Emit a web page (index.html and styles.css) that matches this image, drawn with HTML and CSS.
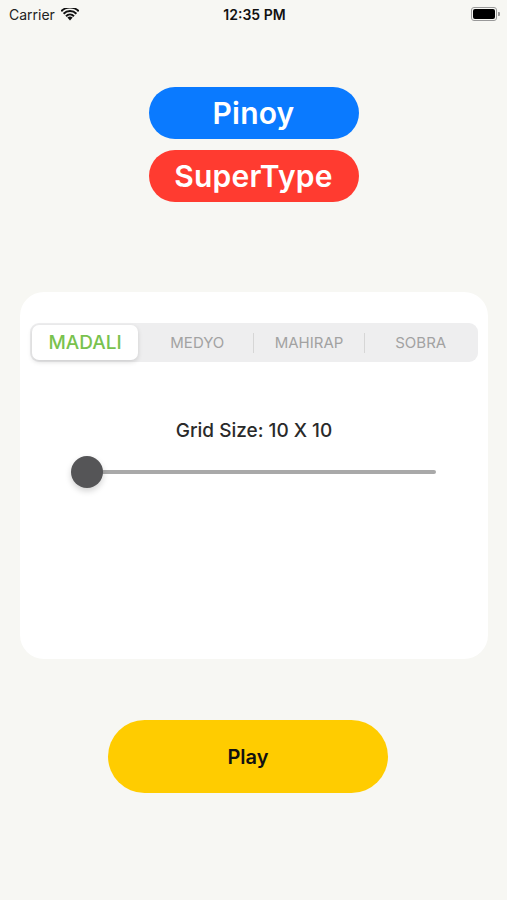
FILE: index.html
```html
<!DOCTYPE html>
<html lang="en">
<head>
    <meta charset="UTF-8">
    <meta name="viewport" content="width=device-width, initial-scale=1.0">
    <title>Pinoy SuperType</title>
    <link rel="stylesheet" href="styles.css">
</head>
<body>
    <div class="status-bar">
        <div class="status-left">
            <span>Carrier</span>
            <svg class="wifi" width="18" height="13" viewBox="0 0 18 13">
                <path d="M9 12.5 L6.4 9.6 A3.8 3.8 0 0 1 11.6 9.6 Z" fill="#111"/>
                <path d="M4.3 7.4 A6.8 6.8 0 0 1 13.7 7.4 L12.3 8.9 A4.8 4.8 0 0 0 5.7 8.9 Z" fill="#111"/>
                <path d="M1.9 4.9 A10.2 10.2 0 0 1 16.1 4.9 L14.7 6.4 A8.2 8.2 0 0 0 3.3 6.4 Z" fill="#111"/>
                <path d="M-0.4 2.5 A13.4 13.4 0 0 1 18.4 2.5 L17 3.9 A11.4 11.4 0 0 0 1 3.9 Z" fill="#111"/>
            </svg>
        </div>
        <div class="status-time">12:35 PM</div>
        <div class="status-right">
            <div class="battery"><div class="battery-fill"></div></div>
            <div class="battery-cap"></div>
        </div>
    </div>

    <div class="title">
        <div class="pill pill-blue">Pinoy</div>
        <div class="pill pill-red">SuperType</div>
    </div>

    <div class="card">
        <div class="segments">
            <div class="segment selected">MADALI</div>
            <div class="segment">MEDYO</div>
            <div class="divider"></div>
            <div class="segment">MAHIRAP</div>
            <div class="divider"></div>
            <div class="segment">SOBRA</div>
        </div>
        <div class="grid-label">Grid Size: 10 X 10</div>
        <div class="slider">
            <div class="slider-track"></div>
            <div class="slider-thumb"></div>
        </div>
    </div>

    <div class="play-wrap">
        <button class="play">Play</button>
    </div>
</body>
</html>
```

FILE: styles.css
```css
body {
    margin: 0;
    background-color: #f7f7f3;
    font-family: Inter, "Liberation Sans", sans-serif;
    color: #111;
    user-select: none;
}
.status-bar {
    height: 28px;
    display: flex;
    align-items: center;
    justify-content: space-between;
    padding: 0 7px 0 9px;
    font-size: 14px;
}
.status-left {
    display: flex;
    align-items: center;
    gap: 6px;
    width: 120px;
    color: #222;
}
.status-time {
    font-weight: 600;
}
.status-right {
    width: 120px;
    display: flex;
    justify-content: flex-end;
    align-items: center;
}
.battery {
    width: 22px;
    height: 10px;
    border: 1px solid #999;
    border-radius: 3px;
    padding: 1px;
}
.battery-fill {
    width: 100%;
    height: 100%;
    background: #000;
    border-radius: 2px;
}
.battery-cap {
    width: 2px;
    height: 4px;
    background: #999;
    border-radius: 0 1px 1px 0;
    margin-left: 1px;
}
.title {
    display: flex;
    flex-direction: column;
    align-items: center;
    gap: 11px;
    margin-top: 59px;
}
.pill {
    width: 210px;
    height: 52px;
    border-radius: 26px;
    color: #fff;
    font-size: 30px;
    font-weight: 600;
    display: flex;
    align-items: center;
    justify-content: center;
    letter-spacing: 0.2px;
}
.pill-blue {
    background-color: #0a7aff;
}
.pill-red {
    background-color: #ff3b30;
}
.card {
    margin: 90px 19px 0 20px;
    height: 367px;
    background: #fff;
    border-radius: 24px;
    padding: 31px 10px 0 10px;
    box-sizing: border-box;
}
.segments {
    display: flex;
    align-items: center;
    height: 39px;
    background: #eeeeef;
    border-radius: 9px;
    padding: 2px;
    box-sizing: border-box;
}
.segment {
    flex: 1;
    text-align: center;
    font-size: 15px;
    color: #a2a2a2;
    height: 100%;
    display: flex;
    align-items: center;
    justify-content: center;
}
.segment.selected {
    flex: 0 0 106px;
    background: #fff;
    border-radius: 7px;
    color: #79c24e;
    font-size: 19px;
    font-weight: 500;
    box-shadow: 0 2px 5px rgba(0, 0, 0, 0.14);
    margin-right: 4px;
}
.divider {
    width: 1px;
    height: 20px;
    background: #d6d6d6;
}
.grid-label {
    margin-top: 57px;
    text-align: center;
    font-size: 19px;
    font-weight: 500;
    color: #2a2a2a;
}
.slider {
    position: relative;
    margin: 13px 42px 0 41px;
    height: 34px;
    display: flex;
    align-items: center;
}
.slider-track {
    flex: 1;
    height: 4px;
    border-radius: 2px;
    background: #a9a9a9;
    margin-left: 6px;
}
.slider-thumb {
    position: absolute;
    left: 0;
    top: 1px;
    width: 32px;
    height: 32px;
    border-radius: 50%;
    background: #555557;
    box-shadow: 0 3px 6px rgba(0, 0, 0, 0.18);
}
.play-wrap {
    display: flex;
    margin-top: 61px;
    padding-left: 108px;
}
.play {
    width: 280px;
    height: 73px;
    border: none;
    border-radius: 37px;
    background-color: #ffcc00;
    font-family: Inter, "Liberation Sans", sans-serif;
    font-size: 20px;
    font-weight: 600;
    color: #111;
    cursor: pointer;
}
```
